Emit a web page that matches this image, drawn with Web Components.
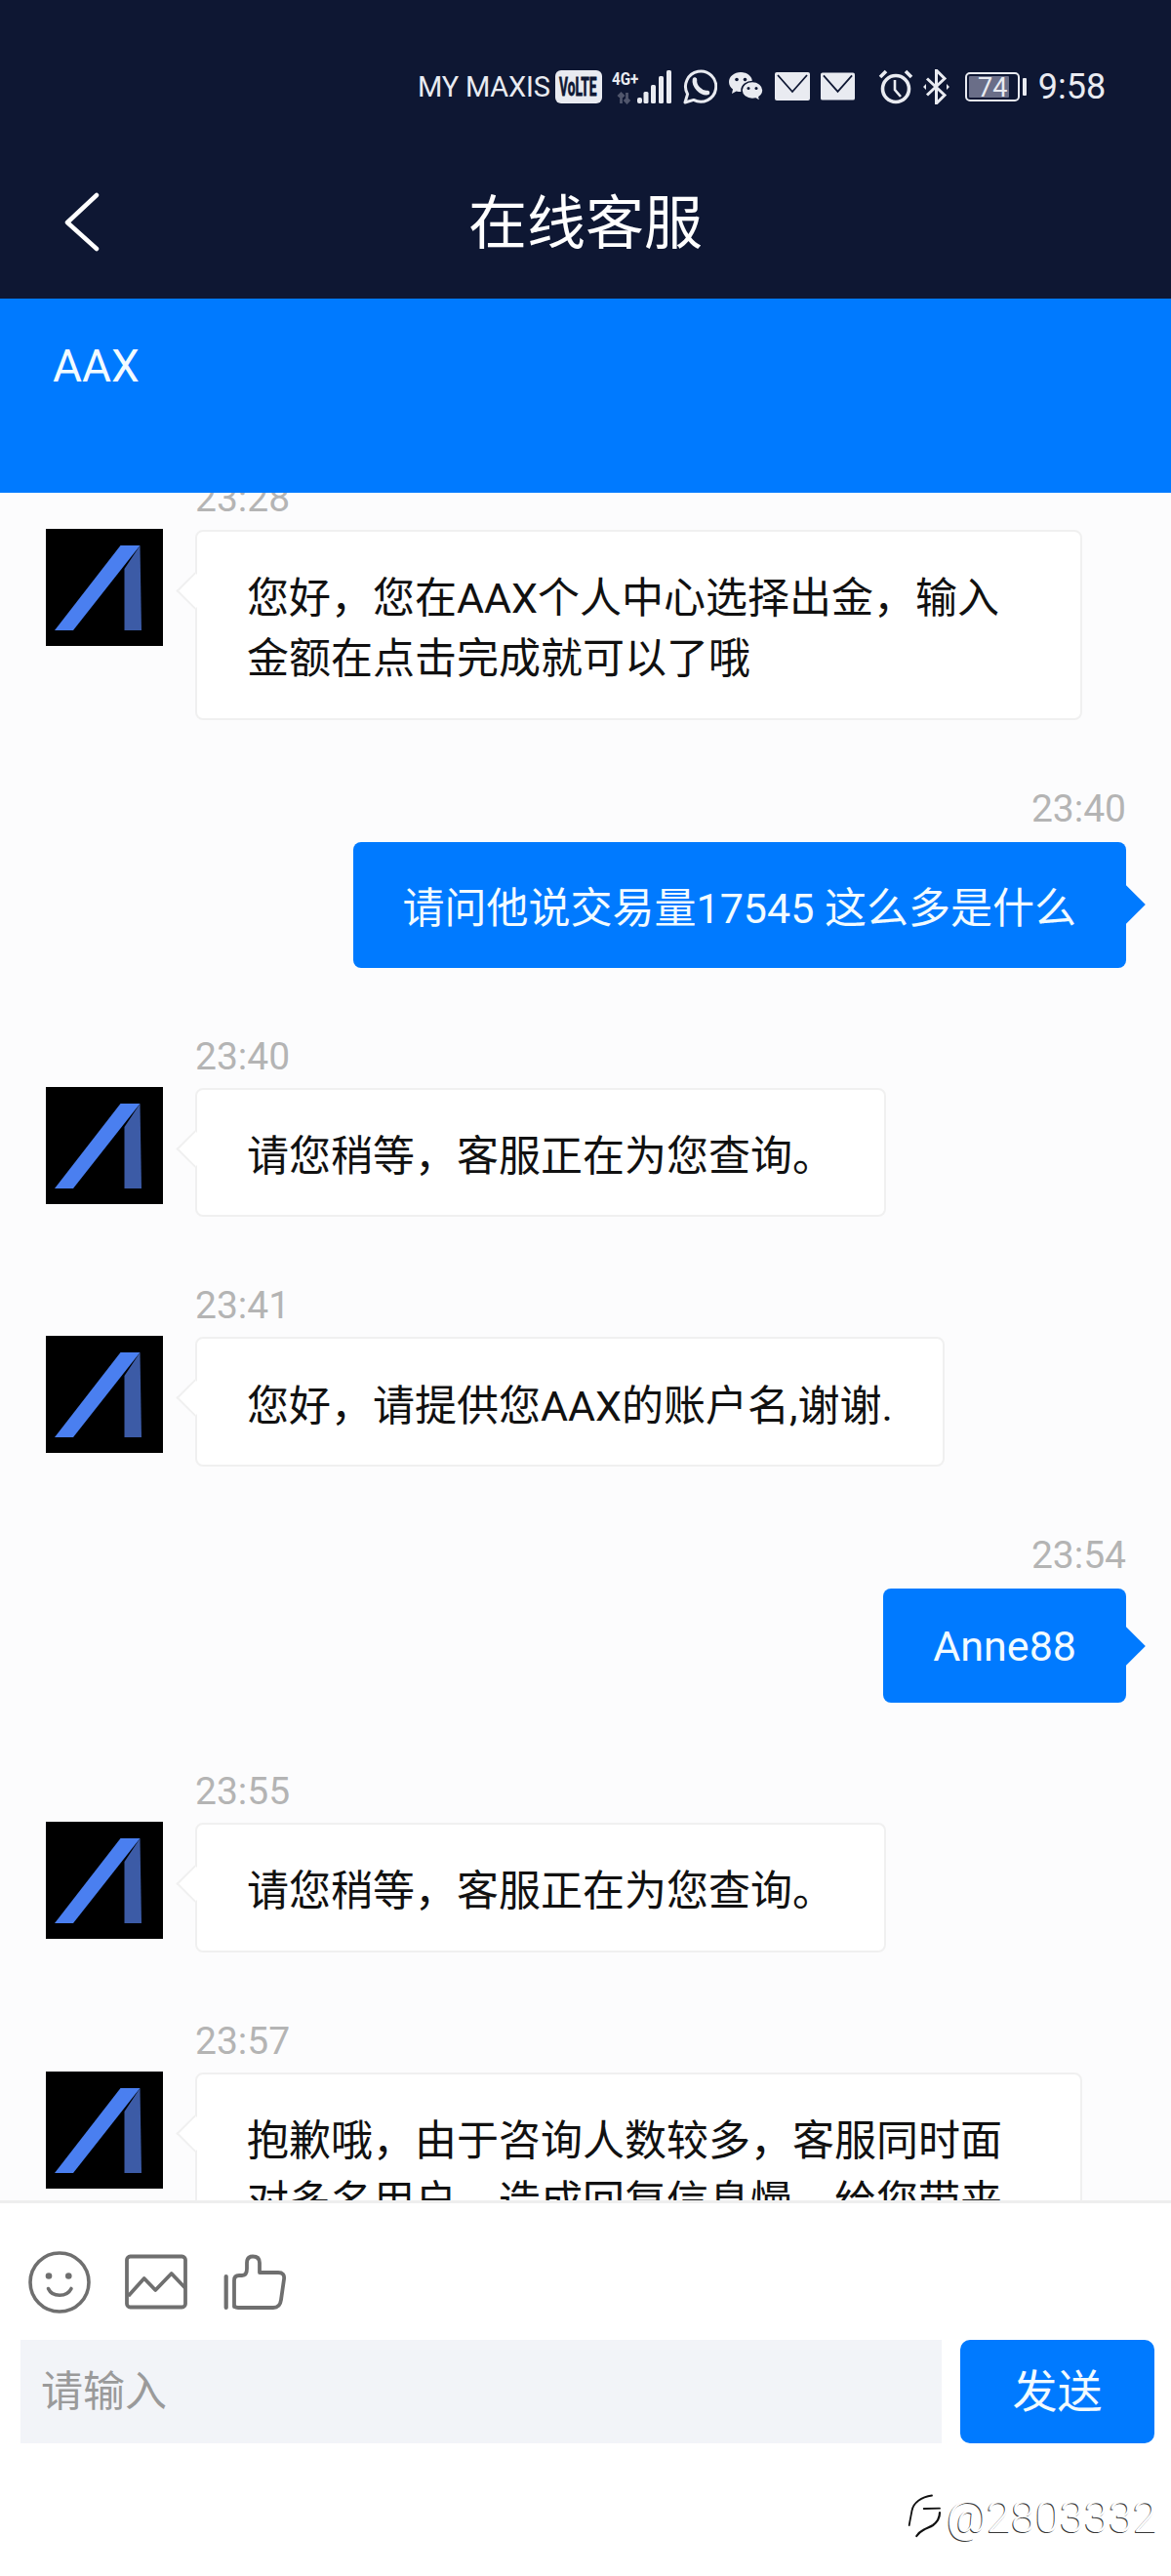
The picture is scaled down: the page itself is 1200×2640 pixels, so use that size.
<!DOCTYPE html>
<html lang="zh">
<head>
<meta charset="utf-8">
<title>在线客服</title>
<style>
  html, body { margin: 0; padding: 0; background: #fff; }
  body { font-family: Roboto, "Noto Sans CJK SC", sans-serif; }
</style>
</head>
<body>
<support-app>
  <status-bar></status-bar>
  <title-bar>在线客服</title-bar>
  <agent-band>AAX</agent-band>
  <chat-list>
    <chat-message side="left" time="23:28">您好，您在AAX个人中心选择出金，输入金额在点击完成就可以了哦</chat-message>
    <chat-message side="right" time="23:40">请问他说交易量17545 这么多是什么</chat-message>
    <chat-message side="left" time="23:40">请您稍等，客服正在为您查询。</chat-message>
    <chat-message side="left" time="23:41">您好，请提供您AAX的账户名,谢谢.</chat-message>
    <chat-message side="right" time="23:54">Anne88</chat-message>
    <chat-message side="left" time="23:55">请您稍等，客服正在为您查询。</chat-message>
    <chat-message side="left" time="23:57">抱歉哦，由于咨询人数较多，客服同时面对多名用户，造成回复信息慢，给您带来不便，敬请谅解。</chat-message>
  </chat-list>
  <chat-composer></chat-composer>
  <water-mark>@2803332</water-mark>
</support-app>

<script>
(function () {

  const FONT = 'Roboto, "Noto Sans CJK SC", sans-serif';
  const LIGHT = "#e9ebf1";
  const NAVY = "#0e1733";
  const BLUE = "#007aff";

  // ====== PAGE SHELL ======
  class SupportApp extends HTMLElement {
    constructor() {
      super();
      this.attachShadow({ mode: "open" }).innerHTML = `
        <style>
          :host {
            display: flex;
            flex-direction: column;
            position: relative;
            width: 1200px;
            height: 2640px;
            overflow: hidden;
            background: #fff;
            font-family: ${FONT};
          }
        </style>
        <slot></slot>
      `;
    }
  }

  // ====== STATUS BAR ======
  class StatusBar extends HTMLElement {
    constructor() {
      super();
      this.attachShadow({ mode: "open" }).innerHTML = `
        <style>
          :host {
            display: flex;
            align-items: center;
            flex: none;
            height: 177px;
            padding-left: 428px;
            box-sizing: border-box;
            background: ${NAVY};
            color: ${LIGHT};
          }
          svg { display: block; flex: none; }
          .carrier { font-size: 29px; letter-spacing: -.2px; white-space: nowrap; }
          .clock { font-size: 36px; margin-left: 12px; white-space: nowrap; }
          text { font-family: Roboto, sans-serif; font-weight: 700; }
        </style>
        <span class="carrier">MY MAXIS</span>

        <svg style="margin-left:5px" width="48" height="34" viewBox="0 0 48 34">
          <rect width="48" height="34" rx="6" fill="${LIGHT}"/>
          <text transform="translate(4 26) scale(.55 1)" font-size="25" fill="${NAVY}" stroke="${NAVY}" stroke-width=".8">VoLTE</text>
        </svg>

        <svg style="margin-left:10px" width="61" height="36" viewBox="0 0 61 36">
          <text transform="translate(0 16) scale(.8 1)" font-size="19" fill="${LIGHT}">4G+</text>
          <path d="M9.500 35V25M6.500 28l3-3 3 3M15.500 24v10M12.800 31l2.700 3 2.700-3" fill="none" stroke="#50566c" stroke-width="2.800"/>
          <rect x="26" y="29" width="5" height="6" rx="2" fill="${LIGHT}"/>
          <rect x="32.500" y="23" width="5" height="12" rx="1.500" fill="${LIGHT}"/>
          <rect x="40" y="16" width="5" height="19" rx="1.500" fill="${LIGHT}"/>
          <rect x="48" y="7" width="5" height="28" rx="1.500" fill="${LIGHT}"/>
          <rect x="56" y="1" width="5" height="34" rx="1.500" fill="${LIGHT}"/>
        </svg>

        <svg style="margin-left:12px" width="35" height="36" viewBox="0 0 35 36">
          <path d="M2 34l2.600-8.600A15.600 15.600 0 1 1 10.800 31.400Z" fill="none" stroke="${LIGHT}" stroke-width="3" stroke-linejoin="round"/>
          <path d="M12 10.500c-1.200 6.500 6.500 14.500 13 13.500" fill="none" stroke="${LIGHT}" stroke-width="4.600" stroke-linecap="round"/>
        </svg>

        <svg style="margin-left:12px" width="35" height="30" viewBox="0 0 35 30">
          <path d="M12 0C5.500 0 0 4.400 0 10c0 3 1.600 5.600 4 7.400L3 22l4.600-2.600c1.400.4 2.900.6 4.400.6 6.500 0 12-4.400 12-10S18.500 0 12 0Z" fill="${LIGHT}"/>
          <path d="M24 9.500c-6 0-11 4-11 9s5 9 11 9c1.200 0 2.400-.2 3.500-.5L32 30l-1-4.500c2.500-1.700 4-4.200 4-7 0-5-5-9-11-9Z" fill="${LIGHT}" stroke="${NAVY}" stroke-width="1.600"/>
          <circle cx="8" cy="7.500" r="1.800" fill="${NAVY}"/><circle cx="16.500" cy="7.500" r="1.800" fill="${NAVY}"/>
          <circle cx="20" cy="16.500" r="1.500" fill="${NAVY}"/><circle cx="28" cy="16.500" r="1.500" fill="${NAVY}"/>
        </svg>

        <svg style="margin-left:12px" width="36" height="29" viewBox="0 0 36 29">
          <rect width="36" height="29" rx="2" fill="${LIGHT}"/>
          <path d="M3 3l15 17L33 3" fill="none" stroke="${NAVY}" stroke-width="1.800"/>
        </svg>
        <svg style="margin-left:11px" width="35" height="29" viewBox="0 0 36 29">
          <rect width="36" height="29" rx="2" fill="${LIGHT}"/>
          <path d="M3 3l15 17L33 3" fill="none" stroke="${NAVY}" stroke-width="1.800"/>
        </svg>

        <svg style="margin-left:24px" width="36" height="36" viewBox="0 0 36 36">
          <circle cx="18" cy="20" r="13.500" fill="none" stroke="${LIGHT}" stroke-width="3.600"/>
          <path d="M17 11v10l6 7" fill="none" stroke="${LIGHT}" stroke-width="2.600"/>
          <path d="M2 8l6-6M34 8l-6-6" fill="none" stroke="${LIGHT}" stroke-width="3.600"/>
        </svg>

        <svg style="margin-left:10px" width="27" height="36" viewBox="0 0 27 36">
          <path d="M4 9.500l18 17L13.500 35V1L22 9.500l-18 17" fill="none" stroke="${LIGHT}" stroke-width="3"/>
          <path d="M0 18l3-3v6ZM27 18l-3-3v6Z" fill="${LIGHT}"/>
        </svg>

        <svg style="margin-left:16px" width="63" height="30" viewBox="0 0 63 30">
          <rect x="1" y="1" width="54" height="28" rx="4" fill="none" stroke="${LIGHT}" stroke-width="2"/>
          <rect x="4" y="4" width="41" height="22" rx="1" fill="#6a6e88"/>
          <rect x="59" y="6" width="4" height="18" rx="1" fill="${LIGHT}"/>
          <text x="13" y="25" font-size="27" style="font-weight:400" fill="${LIGHT}">74</text>
        </svg>

        <span class="clock">9:58</span>
      `;
    }
  }

  // ====== TITLE BAR ======
  class TitleBar extends HTMLElement {
    constructor() {
      super();
      this.attachShadow({ mode: "open" }).innerHTML = `
        <style>
          :host {
            display: grid;
            grid-template-columns: 1fr auto 1fr;
            align-items: center;
            flex: none;
            height: 129px;
            padding-bottom: 33px;
            box-sizing: border-box;
            background: ${NAVY};
            color: #fff;
            font-size: 60px;
          }
          svg { display: block; margin-left: 66px; }
          .title { line-height: 96px; padding-top: 5px; }
        </style>
        <svg width="36" height="62" viewBox="0 0 36 62">
          <path d="M33 3L3 31l30 27" fill="none" stroke="#fff" stroke-width="4.500" stroke-linecap="round" stroke-linejoin="round"/>
        </svg>
        <div class="title"><slot></slot></div>
        <div></div>
      `;
    }
  }

  // ====== BLUE AGENT BAND ======
  class AgentBand extends HTMLElement {
    constructor() {
      super();
      this.attachShadow({ mode: "open" }).innerHTML = `
        <style>
          :host {
            display: block;
            flex: none;
            height: 199px;
            padding: 39px 54px 0;
            box-sizing: border-box;
            background: ${BLUE};
            color: #f2fbff;
            font-size: 46px;
            line-height: 60px;
          }
        </style>
        <slot></slot>
      `;
    }
  }

  // ====== CHAT LIST ======
  class ChatList extends HTMLElement {
    constructor() {
      super();
      this.attachShadow({ mode: "open" }).innerHTML = `
        <style>
          :host {
            display: block;
            flex: 1;
            min-height: 0;
            overflow: hidden;
            background: #fcfcfd;
          }
          .scroller {
            display: flex;
            flex-direction: column;
            gap: 69px;
            margin-top: -16px;
          }
        </style>
        <div class="scroller"><slot></slot></div>
      `;
    }
  }

  // ====== ONE MESSAGE ======
  class ChatMessage extends HTMLElement {
    connectedCallback() {
      if (this.shadowRoot) return;
      const side = this.getAttribute("side") || "left";
      const time = this.getAttribute("time") || "";
      const avatar = side === "left" ? `
        <svg class="avatar" width="120" height="120" viewBox="0 0 120 120">
          <rect width="120" height="120" fill="#000"/>
          <g style="filter:blur(.7px)">
            <path d="M80.500 41L96.500 17 98 104H80.500Z" fill="#3c5ba6"/>
            <path d="M9 104L76.500 17H96.500L28 104Z" fill="#4a7ff0"/>
          </g>
        </svg>` : "";
      this.attachShadow({ mode: "open" }).innerHTML = `
        <style>
          :host { display: block; }
          .row { display: flex; align-items: flex-start; }
          .row.left { padding-left: 47px; gap: 33px; }
          .row.right { justify-content: flex-end; padding-right: 46px; }
          .avatar { display: block; flex: none; margin-top: 53px; }
          .col { display: flex; flex-direction: column; min-width: 0; }
          .right .col { align-items: flex-end; }
          .time {
            color: #b4b4b4;
            font-size: 39px;
            line-height: 44px;
            margin-bottom: 10px;
          }
          .right .time { margin-bottom: 12px; }
          .bubble {
            position: relative;
            box-sizing: border-box;
            max-width: 909px;
            padding: 33.4px 51px;
            border-radius: 8px;
            font-size: 43px;
          }
          .left .bubble { background: #fff; border: 2px solid #f0f0f0; color: #111; }
          .right .bubble { background: ${BLUE}; color: #f2fbff; }
          .bubble::before {
            content: "";
            position: absolute;
            box-sizing: border-box;
            transform: rotate(45deg);
          }
          .left .bubble::before {
            width: 27px;
            height: 27px;
            left: -16px;
            top: 47px;
            background: #fff;
            border-left: 2px solid #f0f0f0;
            border-bottom: 2px solid #f0f0f0;
          }
          .right .bubble::before {
            width: 28px;
            height: 28px;
            right: -14px;
            top: calc(50% - 14px);
            background: ${BLUE};
          }
        </style>
        <div class="row ${side}">
          ${avatar}
          <div class="col">
            <div class="time">${time}</div>
            <div class="bubble"><slot></slot></div>
          </div>
        </div>
      `;
    }
  }

  // ====== COMPOSER ======
  class ChatComposer extends HTMLElement {
    constructor() {
      super();
      this.attachShadow({ mode: "open" }).innerHTML = `
        <style>
          :host {
            display: block;
            flex: none;
            height: 385px;
            box-sizing: border-box;
            border-top: 3px solid #eeeeee;
            background: #fff;
            padding: 49px 17px 0 21px;
          }
          .tools { display: flex; height: 64px; padding-left: 8px; }
          .tools svg { display: block; }
          .tools svg + svg { margin-left: 35px; }
          .tools svg:last-child { margin-left: 37px; }
          .inputs { display: flex; gap: 19px; margin-top: 27px; height: 106px; }
          .field {
            flex: 1;
            background: #f2f4f8;
            color: #9a9a9a;
            font-size: 43px;
            line-height: 106px;
            padding-left: 21px;
          }
          .send {
            flex: none;
            width: 199px;
            border-radius: 10px;
            background: ${BLUE};
            color: #f2fbff;
            font-size: 46px;
            line-height: 106px;
            text-align: center;
          }
        </style>
        <div class="tools">
          <svg width="64" height="64" viewBox="0 0 64 64" fill="none" stroke="#6f6f6f" stroke-width="3.600">
            <circle cx="32" cy="32" r="30"/>
            <circle cx="21" cy="25.500" r="3.300" fill="#6f6f6f" stroke="none"/>
            <circle cx="41.300" cy="25.500" r="3.300" fill="#6f6f6f" stroke="none"/>
            <path d="M20.500 38.500c4 9 19 9 23.500 0" stroke-linecap="round"/>
          </svg>
          <svg width="64" height="64" viewBox="0 0 64 64" fill="none" stroke="#6f6f6f" stroke-width="3.800" stroke-linejoin="round">
            <rect x="2" y="5.500" width="60" height="52" rx="3.500"/>
            <path d="M3.500 46L19.700 28 31.300 40 47.700 23 62 38"/>
          </svg>
          <svg width="64" height="64" viewBox="0 0 64 64" fill="none" stroke="#6f6f6f" stroke-width="3.800" stroke-linejoin="round">
            <path d="M2.700 26V58" stroke-width="4.200" stroke-linecap="round"/>
            <path d="M11 57V30Q11 25 16 25H19Q24 25 24 18V12Q24 5.500 30 5.500 37 5.500 37 12V22H56Q63 22 62 29L59 50Q58 58 51 58H15Q11 58 11 55Z"/>
          </svg>
        </div>
        <div class="inputs">
          <div class="field">请输入</div>
          <div class="send">发送</div>
        </div>
      `;
    }
  }

  // ====== WATERMARK ======
  class WaterMark extends HTMLElement {
    constructor() {
      super();
      this.attachShadow({ mode: "open" }).innerHTML = `
        <style>
          :host {
            position: absolute;
            left: 930px;
            top: 2555px;
            display: flex;
            align-items: center;
            gap: 4px;
            height: 48px;
            color: #fff;
            font-family: Roboto, sans-serif;
            font-weight: 300;
            font-size: 45px;
            text-shadow: -1px 1px 0 rgba(0, 0, 0, .8);
            white-space: nowrap;
          }
          svg { display: block; flex: none; }
        </style>
        <svg width="36" height="46" viewBox="0 0 36 46" fill="none" stroke="#111" stroke-width="1.800" stroke-linecap="round">
          <path d="M25 1.500C14 3 6 9 4.500 17c-.7 4-1.800 9-2.800 15"/>
          <path d="M16.700 15L33 14.700"/>
          <path d="M33 19c0 6-3 10-7 13-3 2-7 3-10 5-3 1.500-5 3.500-6.700 6" stroke-width="2.200"/>
        </svg>
        <slot></slot>
      `;
    }
  }

  customElements.define("support-app", SupportApp);
  customElements.define("status-bar", StatusBar);
  customElements.define("title-bar", TitleBar);
  customElements.define("agent-band", AgentBand);
  customElements.define("chat-list", ChatList);
  customElements.define("chat-message", ChatMessage);
  customElements.define("chat-composer", ChatComposer);
  customElements.define("water-mark", WaterMark);

})();
</script>
</body>
</html>
